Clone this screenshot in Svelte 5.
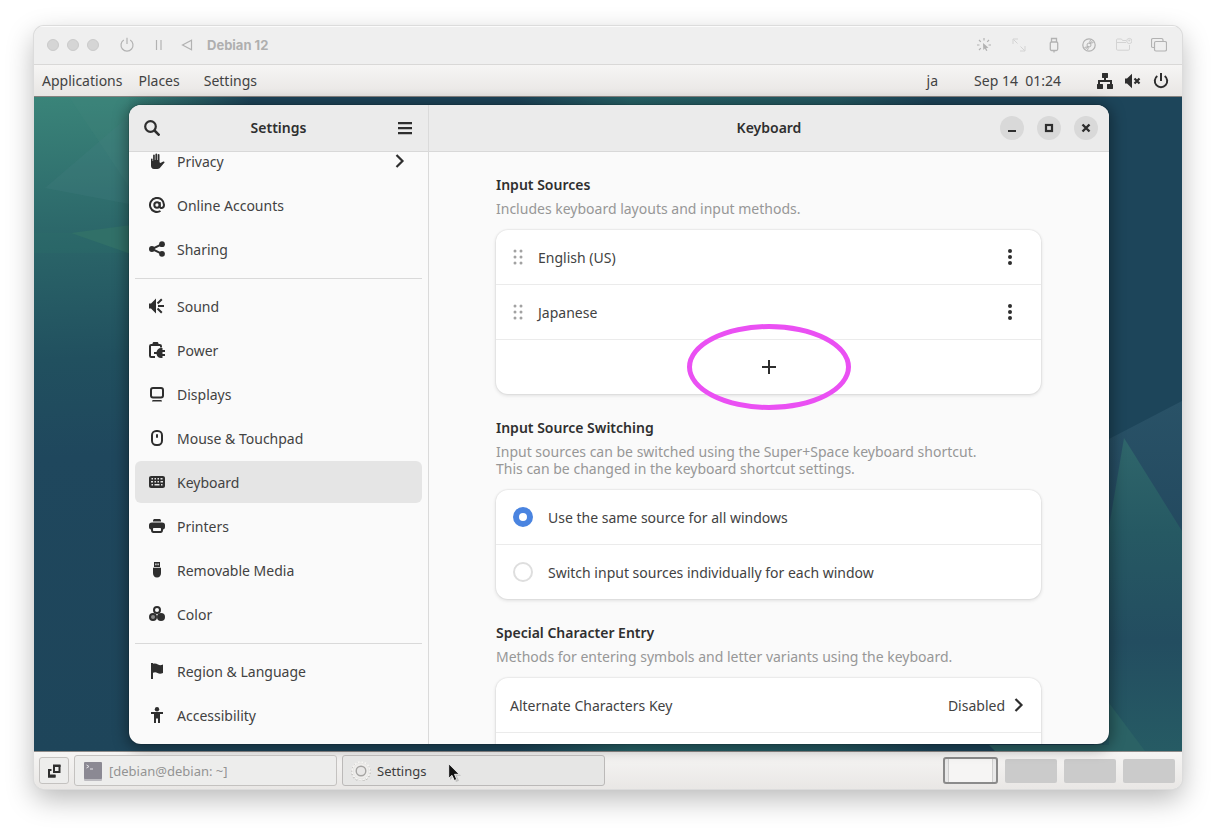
<script>
  const icons = {
    privacy:
      '<path d="M2 6.2c0-1 1.6-1 1.6 0V8h.5V2.3c0-1.1 1.7-1.1 1.700 0V7h.6V1.300c0-1.100 1.800-1.100 1.800 0V7h.6V1.800c0-1.100 1.700-1.100 1.700 0V9.300l.9.8 2.900-1.600c1-.4 1.700.6 1 1.300l-3.600 4.200c-.9 1.200-1.800 2-3.400 2H5C3 16 2 14.600 2 12.800Z"/>',
    accounts:
      '<g fill="none" stroke="currentColor" stroke-width="2"><circle cx="8" cy="8" r="2.700"/><path d="M10.700 5v4.200c0 2.500 4.300 2.500 4.300-1.200a7 7 0 1 0-3.500 6"/></g>',
    sharing:
      '<circle cx="2.900" cy="8" r="2.900"/><circle cx="13" cy="3.200" r="2.900"/><circle cx="13" cy="12.800" r="2.900"/><path d="M13 3.200 3 8l10 4.800" fill="none" stroke="currentColor" stroke-width="2"/>',
    sound:
      '<path d="M0 5.500h2L7 .5v15L2 10.500H0Z"/><path d="M8.500 5.500 12.800 1.300M9 8H15M8.500 10.500l4.300 4.200" fill="none" stroke="currentColor" stroke-width="2"/>',
    power:
      '<path d="M12 5.500V4.200C12 3.500 11.500 3 10.800 3H2.200C1.500 3 1 3.500 1 4.200v9.600c0 .7.500 1.200 1.200 1.200H6" fill="none" stroke="currentColor" stroke-width="2"/><path d="M3.500 2V1.500C3.500.6 4.200 0 5 0h3c.8 0 1.500.6 1.500 1.500V2ZM5 10h2.500C8 8 9.500 6 12 6h1.500v2H16v2h-2.500v2H16v2h-2.500v2H12c-2.500 0-4-1.500-4.500-4H5Z"/>',
    displays:
      '<rect x="2" y="2" width="12" height="9.500" rx="2" fill="none" stroke="currentColor" stroke-width="2"/><path d="M4 14h8c.8 0 1 1.500 1 1.500H3S3.200 14 4 14Z"/>',
    mouse:
      '<rect x="3" y="1" width="10" height="14" rx="4.200" fill="none" stroke="currentColor" stroke-width="2"/><rect x="7" y="4" width="2" height="4" rx="1"/>',
    keyboard:
      '<path fill-rule="evenodd" d="M2.200 2h11.600C15.200 2 16 2.800 16 4.200v7.600c0 1.400-.8 2.200-2.200 2.200H2.200C.8 14 0 13.200 0 11.800V4.200C0 2.800.8 2 2.200 2ZM2.500 4v1.600H4V4Zm3 0v1.600H7V4Zm3 0v1.600H10V4Zm3 0v1.600h2V4ZM2 7v1.600h2V7Zm3.500 0v1.600H7V7Zm3 0v1.600H10V7Zm3 0v1.600h2.500V7ZM2.500 10v1.600H4V10Zm3 0v1.600h5V10Zm6.500 0v1.600h1.500V10Z"/>',
    printer:
      '<path d="M4 3c0-1.400.6-2 2-2h4c1.400 0 2 .6 2 2v.500H4Z"/><path fill-rule="evenodd" d="M3 4.500h10c2 0 3 1 3 2.800V9c0 1.600-.8 2.500-2 2.500V12c0 2-.8 3-2.500 3h-7C2.800 15 2 14 2 12v-.500C.8 11.500 0 10.600 0 9V7.300c0-1.800 1-2.800 3-2.800ZM5 10c-.7 0-1 .4-1 1v1c0 .7.300 1 1 1h6c.7 0 1-.3 1-1v-1c0-.6-.3-1-1-1Z"/>',
    usb:
      '<path fill-rule="evenodd" d="M5 0h6v5H5Zm1.300 1.500v1.700h1.200V1.500Zm2.200 0v1.700h1.200V1.500Z"/><path d="M4 5.700h8V11c0 2.500-1.400 4.500-4 4.500S4 13.500 4 11Z"/>',
    color:
      '<circle cx="8" cy="4" r="3" fill="none" stroke="currentColor" stroke-width="2"/><circle cx="4" cy="11" r="3" fill="#898989" stroke="currentColor" stroke-width="2"/><circle cx="12" cy="11" r="4"/>',
    flag: '<path d="M2 0h2v.8c2-.8 3.500-.3 5 .8 1.700 1 3 .8 5 0V10c-2 .8-3.700 1-5.500 0C7 9 5.500 9 4 9.700V16H2Z"/>',
    access:
      '<circle cx="8" cy="2.200" r="2.200"/><path d="M2 5h12v2h-3v9H9v-4.500H7V16H5V7H2Z"/>',
    next: '<path d="m4.500 2 6 6-6 6" fill="none" stroke="currentColor" stroke-width="2.200"/>',
    search:
      '<circle cx="6.500" cy="6.500" r="5.300" fill="none" stroke="currentColor" stroke-width="2.200"/><path d="m10.500 10.500 5 5" stroke="currentColor" stroke-width="2.500"/>',
    menu: '<path d="M1 2h14v2.200H1ZM1 7h14v2.200H1ZM1 12h14v2.200H1Z"/>',
    minimize: '<path d="M4 10h8v2H4Z"/>',
    maximize: '<rect x="5" y="5" width="6" height="6" fill="none" stroke="currentColor" stroke-width="2.200"/>',
    close: '<path d="m4.500 4.500 7 7M11.500 4.500l-7 7" stroke="currentColor" stroke-width="2.400"/>',
    more: '<circle cx="8" cy="2" r="2"/><circle cx="8" cy="8" r="2"/><circle cx="8" cy="14" r="2"/>',
    plus: '<path d="M7 1h2v6h6v2H9v6H7V9H1V7h6Z"/>',
    grip:
      '<g fill="#a2a2a2"><circle cx="5" cy="2" r="1.500"/><circle cx="11" cy="2" r="1.500"/><circle cx="5" cy="8" r="1.500"/><circle cx="11" cy="8" r="1.500"/><circle cx="5" cy="14" r="1.500"/><circle cx="11" cy="14" r="1.500"/></g>',
    network:
      '<path d="M5.500 0h5C10.800 0 11 .2 11 .5v4c0 .3-.2.500-.5.500H9v2h6v4h.5c.3 0 .5.200.5.500v4c0 .3-.2.500-.5.500h-5c-.3 0-.5-.2-.5-.5v-4c0-.3.200-.5.500-.5H13V9H3v2h2.500c.3 0 .5.200.5.500v4c0 .3-.2.500-.5.500h-5C.2 16 0 15.800 0 15.500v-4C0 11.200.2 11 .5 11H1V7h6V5H5.500C5.200 5 5 4.800 5 4.500v-4C5 .2 5.200 0 5.500 0Z"/>',
    muted:
      '<path d="M0 5.500h2L7 .8v14.400L2 10.500H0Z"/><path d="m9.500 5.500 5 5m0-5-5 5" stroke="currentColor" stroke-width="2.200"/>',
    shutdown:
      '<path d="M4.300 3a6.200 6.200 0 1 0 7.400 0" fill="none" stroke="currentColor" stroke-width="2"/><path d="M7 0h2v8H7Z"/>',
    powerThin:
      '<path d="M4.800 3a6 6 0 1 0 6.400 0M8 .8V7" fill="none" stroke="currentColor" stroke-width="1.200"/>',
    pauseThin: '<path d="M5.500 3v10M10 3v10" stroke="currentColor" stroke-width="1.200"/>',
    backThin: '<path d="M12.500 3.200v9.600L3.500 8Z" fill="none" stroke="currentColor" stroke-width="1.200"/>',
    click:
      '<path d="m7 6 .3 7 1.600-1.600 1.300 2.700 1.200-.6-1.300-2.500 2.400-.2Z"/><path d="M8 1v2.500M1 8h2.500M12.500 8H15M3 3l1.800 1.800M13 3l-1.800 1.800M3 13l1.800-1.800" stroke="currentColor" stroke-width="1.200"/>',
    resize:
      '<path d="m2.500 2.500 4 4M9.500 9.500l4 4M2 7V2h5M14 9v5H9" fill="none" stroke="currentColor"/>',
    stick:
      '<path d="M5.500 5V1.500h5V5M5.500 5h5c.8 0 1.200.4 1.200 1v6c0 1-.5 1.500-1.500 1.500H5.800c-1 0-1.500-.5-1.500-1.500V6c0-.6.400-1 1.200-1ZM8 13.500v2" fill="none" stroke="currentColor" stroke-width="1.300"/>',
    disc:
      '<circle cx="8" cy="8" r="6.200" fill="none" stroke="currentColor" stroke-width="1.200"/><circle cx="8" cy="8" r="2" fill="none" stroke="currentColor"/><path d="m3.500 10.500 4-1M12.500 5.500l-4 1M4.500 12l3-2.500M11.500 4l-3 2.500M9.500 3l-1 2.500M6.500 13l1-2.500" stroke="currentColor"/>',
    folder:
      '<path d="M10 3.500H6.500L5.500 2H1.500C.8 2 .5 2.400.5 3v9c0 .8.400 1.200 1.200 1.200h10.600c.8 0 1.200-.4 1.200-1.200V8M.5 5.500H10" fill="none" stroke="currentColor"/><circle cx="13.300" cy="4" r="2.600" fill="none" stroke="currentColor"/><circle cx="13.300" cy="3.500" r="1"/>',
    copies:
      '<path d="M3.500 10.500H2c-1 0-1.500-.5-1.500-1.500V3c0-1 .5-1.500 1.500-1.500h8.500c1 0 1.500.5 1.500 1.500v1M5 4.500h9c1 0 1.500.5 1.500 1.500v6.500c0 1-.5 1.500-1.500 1.500H5c-1 0-1.500-.5-1.500-1.500V6c0-1 .5-1.500 1.500-1.500Z" fill="none" stroke="currentColor" stroke-width="1.200"/>',
    desktop:
      '<path d="M8 3h5.500v6H8ZM5.500 7H3v6.500h5.500V12" fill="none" stroke="currentColor" stroke-width="2"/><path d="M7 1.500h7.500v2.500H7ZM2 11.500h7.500v3H2Z"/>',
  };

  const groups = [
    [
      ['privacy', 'Privacy'],
      ['accounts', 'Online Accounts'],
      ['sharing', 'Sharing'],
    ],
    [
      ['sound', 'Sound'],
      ['power', 'Power'],
      ['displays', 'Displays'],
      ['mouse', 'Mouse & Touchpad'],
      ['keyboard', 'Keyboard'],
      ['printer', 'Printers'],
      ['usb', 'Removable Media'],
      ['color', 'Color'],
    ],
    [
      ['flag', 'Region & Language'],
      ['access', 'Accessibility'],
    ],
  ];

  const sources = ['English (US)', 'Japanese'];
  const vmTools = ['click', 'resize', 'stick', 'disc', 'folder', 'copies'];

  let panel = $state('Keyboard');
  let switching = $state('same');
</script>

{#snippet icon(name)}
  <svg class="icon" viewBox="0 0 16 16" fill="currentColor" aria-hidden="true">{@html icons[name]}</svg>
{/snippet}

<div class="page">
  <div class="vm">
    <header class="vm-bar">
      <span class="light"></span><span class="light"></span><span class="light"></span>
      <button class="plain first" aria-label="Shut down">{@render icon('powerThin')}</button>
      <button class="plain" aria-label="Pause">{@render icon('pauseThin')}</button>
      <button class="plain back" aria-label="Restart">{@render icon('backThin')}</button>
      <h1>Debian 12</h1>
      <div class="vm-tools">
        {#each vmTools as tool}
          <button class="plain {tool}" aria-label={tool}>{@render icon(tool)}</button>
        {/each}
      </div>
    </header>

    <nav class="top-panel" aria-label="Desktop">
      <button class="plain">Applications</button>
      <button class="plain">Places</button>
      <button class="plain third">Settings</button>
      <span class="spacer"></span>
      <button class="plain">ja</button>
      <button class="plain clock">Sep 14&nbsp; 01:24</button>
      <button class="plain status" aria-label="System">
        {@render icon('network')}{@render icon('muted')}{@render icon('shutdown')}
      </button>
    </nav>

    <div class="desktop">
      <svg class="wallpaper" viewBox="0 0 1148 654" preserveAspectRatio="none" aria-hidden="true">
        <defs>
          <linearGradient id="base" x1="0" y1="0" x2="0.080" y2="1">
            <stop offset="0" stop-color="#3a8479" />
            <stop offset="0.230" stop-color="#2a6468" />
            <stop offset="0.400" stop-color="#21505f" />
            <stop offset="0.550" stop-color="#1f475d" />
            <stop offset="1" stop-color="#1e455a" />
          </linearGradient>
          <linearGradient id="strip">
            <stop offset="0" stop-color="#1d455a" stop-opacity="0" />
            <stop offset="0.080" stop-color="#1d455a" stop-opacity="0" />
            <stop offset="0.190" stop-color="#1d455a" />
            <stop offset="0.420" stop-color="#1d455a" />
            <stop offset="0.520" stop-color="#276469" />
            <stop offset="0.700" stop-color="#245a63" />
            <stop offset="0.780" stop-color="#1d455a" />
          </linearGradient>
          <linearGradient id="peak" x1="0" y1="0" x2="0" y2="1">
            <stop offset="0" stop-color="#2f666b" />
            <stop offset="0.300" stop-color="#265963" />
            <stop offset="0.650" stop-color="#234d60" />
            <stop offset="1" stop-color="#265b64" />
          </linearGradient>
          <linearGradient id="ridge" x1="0" y1="0" x2="0" y2="1">
            <stop offset="0" stop-color="#295267" />
            <stop offset="0.400" stop-color="#23495f" />
            <stop offset="1" stop-color="#25545f" />
          </linearGradient>
        </defs>
        <rect width="1148" height="654" fill="url(#base)" />
        <rect width="1148" height="654" fill="url(#strip)" />
        <path d="M35 0 70 52 95 90V0Z" fill="#45857c" opacity=".2" />
        <path d="M11 91 95 19v88Z" fill="#4a8288" opacity=".2" />
        <path d="M0 156h95v-20H0Z" fill="#2c7168" opacity=".2" />
        <path d="m37 136 60-8v29Z" fill="#317068" />
        <path d="m1060 348 15-6 73-38v350h-88Z" fill="url(#ridge)" />
        <path d="m1090 341 58 93v220h-78V460Z" fill="url(#peak)" />
        <path d="m955 648 6 6h150l-36-48v42Z" fill="#2b6265" />
      </svg>

      <div class="window">
        <aside class="sidebar">
          <header class="head">
            <button class="plain" aria-label="Search">{@render icon('search')}</button>
            <h2>Settings</h2>
            <button class="plain" aria-label="Menu">{@render icon('menu')}</button>
          </header>
          <nav class="panels" aria-label="Settings panels">
            {#each groups as group, i}
              {#if i > 0}<hr />{/if}
              {#each group as [glyph, label]}
                <button class="panel" class:selected={panel === label} onclick={() => (panel = label)}>
                  {@render icon(glyph)}
                  <span>{label}</span>
                  {#if label === 'Privacy'}{@render icon('next')}{/if}
                </button>
              {/each}
            {/each}
          </nav>
        </aside>

        <main class="content">
          <header class="head">
            <h2>Keyboard</h2>
            <div class="controls">
              <button aria-label="Minimize">{@render icon('minimize')}</button>
              <button aria-label="Maximize">{@render icon('maximize')}</button>
              <button aria-label="Close">{@render icon('close')}</button>
            </div>
          </header>

          <div class="scroll">
            <section>
              <h3>Input Sources</h3>
              <p>Includes keyboard layouts and input methods.</p>
              <div class="card">
                {#each sources as source}
                  <div class="row source">
                    {@render icon('grip')}
                    <span>{source}</span>
                    <button class="plain" aria-label="Options for {source}">{@render icon('more')}</button>
                  </div>
                {/each}
                <div class="row add">
                  <button class="plain" aria-label="Add input source">{@render icon('plus')}</button>
                  <div class="ring"></div>
                </div>
              </div>
            </section>

            <section>
              <h3>Input Source Switching</h3>
              <p>
                Input sources can be switched using the Super+Space keyboard shortcut.<br />
                This can be changed in the keyboard shortcut settings.
              </p>
              <div class="card">
                <label class="row option">
                  <input type="radio" name="switching" value="same" bind:group={switching} />
                  <span>Use the same source for all windows</span>
                </label>
                <label class="row option">
                  <input type="radio" name="switching" value="each" bind:group={switching} />
                  <span>Switch input sources individually for each window</span>
                </label>
              </div>
            </section>

            <section>
              <h3>Special Character Entry</h3>
              <p>Methods for entering symbols and letter variants using the keyboard.</p>
              <div class="card">
                <button class="row link">
                  <span>Alternate Characters Key</span>
                  <span class="value">Disabled</span>
                  {@render icon('next')}
                </button>
                <div class="row"></div>
              </div>
            </section>
          </div>
        </main>
      </div>
    </div>

    <footer class="taskbar">
      <button class="show" aria-label="Show desktop">{@render icon('desktop')}</button>
      <button class="task">
        <svg class="app" viewBox="0 0 20 20" aria-hidden="true">
          <rect x="1" y="2" width="18" height="18" rx="1" fill="#bcbbc0" />
          <rect x="1" y="1" width="18" height="17" rx="1" fill="#8b8993" />
          <path d="m3.500 4 2.500 1.500L3.500 7M7 8h3" fill="none" stroke="#e4e3e8" />
        </svg>
        <span>[debian@debian: ~]</span>
      </button>
      <button class="task active">
        <svg class="app" viewBox="0 0 20 20" aria-hidden="true">
          <circle cx="10" cy="10.700" r="8.800" fill="none" stroke="#b5b4b1" stroke-width="2.200" stroke-dasharray="1.800 1.656" />
          <circle cx="10" cy="10" r="8.800" fill="#f1f0ee" stroke="#f6f5f3" stroke-width="2" stroke-dasharray="1.800 1.656" />
          <circle cx="10" cy="10" r="7.800" fill="#efeeec" stroke="#dddcda" stroke-width=".5" />
          <circle cx="10" cy="10" r="4.800" fill="#e8e7e6" stroke="#a5a4a2" stroke-width="1.400" />
        </svg>
        <span>Settings</span>
        <svg class="pointer" viewBox="0 0 14 20" aria-hidden="true">
          <path d="M2 2v15l3.500-3.200L8 19l3-1.300-2.300-4.900H13Z" fill="#777" opacity=".35" />
          <path d="M.7.8v14.500l3.300-3 2.300 5.200 2.400-1.100L6.500 11.300h4.700Z" fill="#111" stroke="#fff" stroke-width=".8" />
        </svg>
      </button>
      <span class="spacer"></span>
      <div class="workspaces">
        <button class="current" aria-label="Workspace 1"><span></span></button>
        <button aria-label="Workspace 2"></button>
        <button aria-label="Workspace 3"></button>
        <button aria-label="Workspace 4"></button>
      </div>
    </footer>
  </div>
</div>

<style>
  :global(body) {
    margin: 0;
    background: #fff;
  }
  .page {
    box-sizing: border-box;
    height: 100vh;
    padding: 26px 34px 42px;
    font: 14px/18px 'Noto Sans', 'Open Sans', sans-serif;
    color: #424242;
  }
  .page * {
    box-sizing: border-box;
  }
  button {
    margin: 0;
    font: inherit;
    color: inherit;
    white-space: nowrap;
  }
  h1,
  h2,
  h3,
  p {
    margin: 0;
  }
  .plain {
    display: flex;
    padding: 0;
    border: 0;
    background: none;
  }
  .icon {
    display: block;
    flex: none;
    width: 16px;
    height: 16px;
    color: #2e2e2e;
  }
  .spacer {
    flex: 1;
  }

  .vm {
    display: flex;
    flex-direction: column;
    height: 100%;
    border-radius: 10px;
    overflow: hidden;
    box-shadow:
      0 0 0 1px #dcdcdc,
      0 0 2px rgba(0, 0, 0, 0.12),
      0 10px 28px rgba(0, 0, 0, 0.28);
  }
  .vm-bar {
    display: flex;
    align-items: center;
    flex: none;
    height: 39px;
    padding: 0 15px 2px 13px;
    border-top: 1px solid #fbfbfb;
    border-bottom: 1px solid #d9d8d7;
    background: #efefef;
  }
  .vm-bar .icon {
    color: #b2b2b2;
  }
  .light {
    width: 12px;
    height: 12px;
    margin-right: 8px;
    border: 1px solid #cacaca;
    border-radius: 50%;
    background: #d5d5d5;
  }
  .first {
    margin: 0 16px 0 12px;
  }
  .back {
    margin: 0 12px;
  }
  .vm-bar h1 {
    font: 700 13px/18px Inter, 'Liberation Sans', sans-serif;
    color: #afafaf;
  }
  .vm-tools {
    display: flex;
    gap: 19px;
    margin-left: auto;
  }
  .vm-tools .resize .icon,
  .vm-tools .folder .icon {
    color: #d3d3d3;
  }

  .top-panel {
    display: flex;
    align-items: center;
    flex: none;
    height: 32px;
    padding: 0 13px 0 8px;
    border-bottom: 1px solid #85827f;
    background: linear-gradient(#f6f5f4, #e8e6e4);
    gap: 16px;
  }
  .third {
    margin-left: 8px;
  }
  .clock {
    margin-left: 20px;
  }
  .status {
    gap: 12px;
    margin-left: 20px;
  }

  .desktop {
    position: relative;
    flex: 1;
    display: flex;
    min-height: 0;
    padding: 8px 73px 7px 95px;
    background: #1e455a;
  }
  .wallpaper {
    position: absolute;
    inset: 0;
    width: 100%;
    height: 100%;
  }
  .window {
    position: relative;
    display: flex;
    flex: 1;
    min-width: 0;
    overflow: hidden;
    border-radius: 12px;
    background: #fafafa;
    box-shadow:
      0 0 0 1px rgba(0, 0, 0, 0.1),
      0 2px 14px 3px rgba(0, 0, 0, 0.36);
  }
  .head {
    position: relative;
    z-index: 1;
    display: flex;
    align-items: center;
    flex: none;
    height: 47px;
    padding: 0 15px;
    border-bottom: 1px solid #d8d8d8;
    background: #ebebeb;
  }
  .head h2,
  h3 {
    font-size: 14px;
    line-height: 18px;
    font-weight: 600;
    color: #2f2f2f;
  }
  .head h2 {
    flex: 1;
    text-align: center;
  }
  .sidebar {
    display: flex;
    flex-direction: column;
    flex: none;
    width: 300px;
    border-right: 1px solid #dadada;
  }
  .panels {
    display: flex;
    flex-direction: column;
    gap: 2px;
    margin-top: -12px;
    padding: 0 6px;
  }
  .panel {
    display: flex;
    align-items: center;
    flex: none;
    gap: 12px;
    height: 42px;
    padding: 0 14px;
    border: 0;
    border-radius: 6px;
    background: none;
    text-align: left;
  }
  .panel span {
    flex: 1;
  }
  .panel span,
  .row span {
    padding-top: 2px;
  }
  .panel.selected {
    background: #e5e5e5;
  }
  hr {
    flex: none;
    width: 100%;
    height: 1px;
    margin: 6px 0 4px;
    border: 0;
    background: #d9d9d9;
  }

  .content {
    display: flex;
    flex-direction: column;
    flex: 1;
    min-width: 0;
  }
  .content .head {
    padding: 0 11px;
  }
  .content .head h2 {
    padding-left: 98px;
  }
  .controls {
    display: flex;
    gap: 13px;
  }
  .controls button {
    display: grid;
    place-items: center;
    width: 24px;
    height: 24px;
    padding: 0;
    border: 0;
    border-radius: 50%;
    background: #d9d9d9;
  }
  .scroll {
    flex: 1;
    min-height: 0;
    padding: 24px 68px 0 67px;
  }
  section {
    margin-bottom: 25px;
  }
  p {
    margin: 6px 0 13px;
    line-height: 17px;
    color: #979797;
  }
  .card {
    border-radius: 12px;
    background: #fff;
    box-shadow:
      0 0 0 1px rgba(0, 0, 0, 0.03),
      0 1px 3px 1px rgba(0, 0, 0, 0.07),
      0 2px 6px rgba(0, 0, 0, 0.03);
  }
  .row {
    display: flex;
    align-items: center;
    height: 54px;
  }
  .row + .row {
    height: 55px;
    border-top: 1px solid #ebebeb;
  }
  .source {
    gap: 12px;
    padding: 0 23px 0 14px;
  }
  .source span {
    flex: 1;
  }
  .add {
    position: relative;
    justify-content: center;
  }
  .ring {
    position: absolute;
    top: 50%;
    left: 50%;
    width: 164px;
    height: 86px;
    border: 5px solid #ea50f3;
    border-radius: 50%;
    transform: translate(-50%, -50%);
    pointer-events: none;
  }
  .option {
    gap: 15px;
    padding: 0 17px;
  }
  input[type='radio'] {
    appearance: none;
    width: 20px;
    height: 20px;
    margin: 0;
    border: 2px solid #dedede;
    border-radius: 50%;
    background: #fff;
  }
  input[type='radio']:checked {
    border: 6px solid #4a84e0;
  }
  .link {
    width: 100%;
    padding: 0 14px;
    border: 0;
    background: none;
    gap: 6px;
  }
  .value {
    margin-left: auto;
  }

  .taskbar {
    display: flex;
    align-items: center;
    flex: none;
    height: 38px;
    padding: 0 7px 0 5px;
    border-top: 1px solid #8f8c8a;
    background: linear-gradient(#f6f5f4, #e9e7e5);
    gap: 5px;
  }
  .show,
  .task {
    border: 1px solid #c4c2c0;
    border-radius: 3px;
    background: #ededec;
  }
  .show {
    display: grid;
    place-items: center;
    width: 30px;
    height: 27px;
    padding: 0;
  }
  .task {
    position: relative;
    display: flex;
    align-items: center;
    flex: 0 1 263px;
    gap: 6px;
    height: 31px;
    padding: 0 8px;
    font-size: 13px;
    color: #939393;
  }
  .task.active {
    border-color: #bbb9b8;
    background: #e6e6e5;
    color: #3d3d3d;
  }
  .app {
    flex: none;
    width: 20px;
    height: 20px;
  }
  .pointer {
    position: absolute;
    left: 105px;
    top: 7px;
    width: 14px;
    height: 20px;
  }
  .workspaces {
    display: flex;
    align-items: center;
    gap: 7px;
  }
  .workspaces button {
    width: 52px;
    height: 24px;
    padding: 0;
    border: 0;
    border-radius: 2px;
    background: #cbcbcb;
  }
  .workspaces .current {
    display: flex;
    width: 55px;
    height: 27px;
    padding: 0 3px;
    border: 2px solid #8b8b8b;
    border-radius: 3px;
    background: #e9e9e9;
  }
  .current span {
    flex: 1;
    height: 100%;
    border: solid #cfcfcf;
    border-width: 0 1px;
    background: #f6f5f4;
  }
</style>
